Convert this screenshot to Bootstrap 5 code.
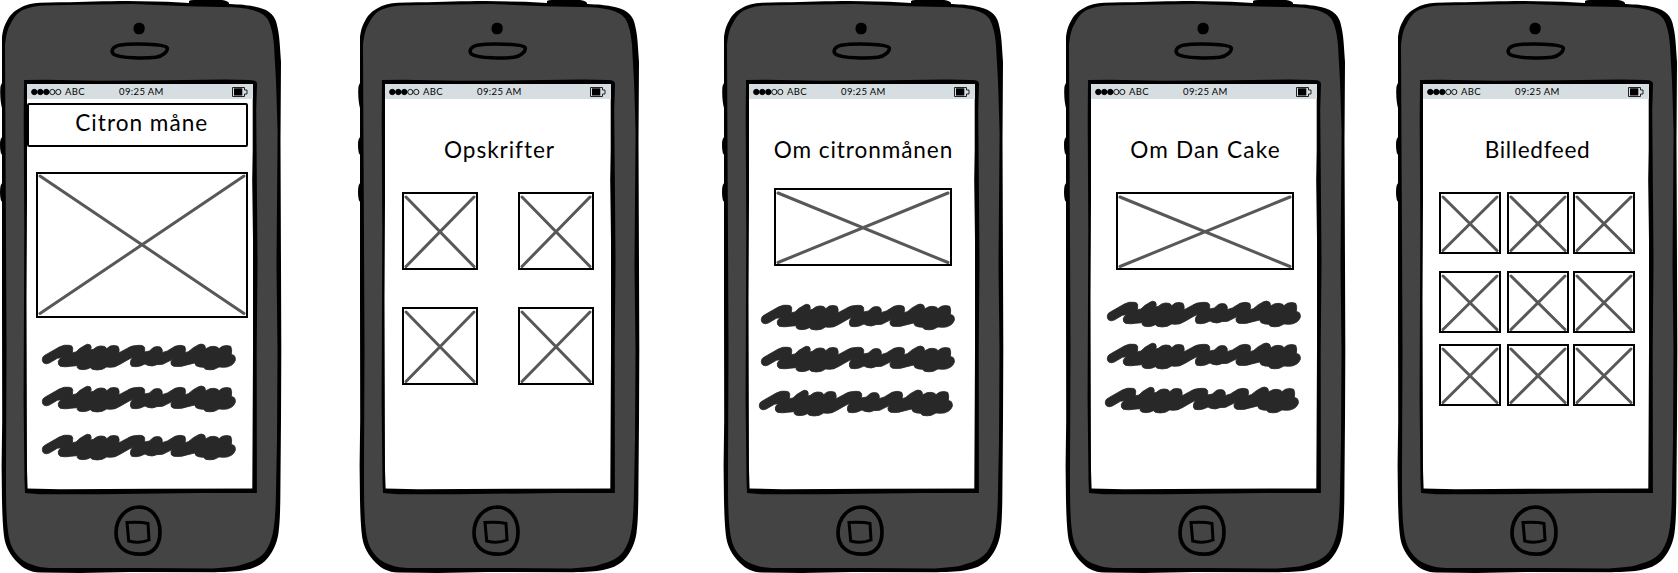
<!DOCTYPE html>
<html lang="da">
<head>
<meta charset="utf-8">
<meta name="viewport" content="width=device-width, initial-scale=1">
<title>Citron måne – wireframes</title>
<link href="https://cdn.jsdelivr.net/npm/bootstrap@5.3.0/dist/css/bootstrap.min.css" rel="stylesheet">
<style>
  body { background: #fff; color: #000; font-family: Lato, "Open Sans", sans-serif; overflow: hidden; }
  .storyboard { display: grid; grid-template-columns: 358px 364px 342px 332px 282px; height: 573px; }
  /* frame drawing and screen share one grid cell */
  .phone { display: grid; width: 282px; height: 573px; }
  .phone > * { grid-area: 1 / 1; }
  .phone-frame { width: 282px; height: 573px; display: block; }
  .phone-screen { width: 225.5px; height: 404.5px; margin: 84px 0 0 27px; display: flex; flex-direction: column; align-items: flex-start; }
  .status { width: 100%; height: 15px; background: #d7dee2; display: grid; grid-template-columns: 34px 54px 1fr 20.5px; align-items: center; padding-left: 4px; font-size: 9.5px; line-height: 14px; flex: none; white-space: nowrap; }
  .status svg { display: block; }
  .status .carrier { letter-spacing: .4px; }
  .status .clock { letter-spacing: .38px; }
  .screen-title { font-size: 22.6px; line-height: 28px; font-weight: 400; margin: 37px 0 0; width: 229px; text-align: center; white-space: nowrap; flex: none; }
  .t-ops { letter-spacing: .95px; }
  .t-om { letter-spacing: .9px; }
  .t-dan { letter-spacing: 1.15px; }
  .t-feed { letter-spacing: .65px; }
  .title-box { width: 220.5px; height: 44px; margin-top: 3.5px; border: 2px solid #000; border-right-width: 2.5px; border-radius: 2px; flex: none; }
  .title-box .screen-title { width: auto; margin: 4px 0 0 9px; letter-spacing: 1px; }
  .pic { border: 2px solid #000; padding: 2.5px 2px 2px; flex: none; display: flex; }
  .pic svg { width: 100%; height: 100%; overflow: visible; display: block; }
  .pic-hero { width: 212px; height: 146px; margin: 25px 0 26.5px 8.7px; }
  .pic-wide { width: 178px; height: 78px; margin: 24px 0 37.7px 25.3px; }
  .pic-wide.low { margin: 28px 0 31px 25.3px; }
  .recipes { display: grid; grid-template-columns: 76px 76px; column-gap: 40px; row-gap: 37px; margin: 28px 0 0 17.4px; }
  .recipes .pic { height: 78px; }
  .feed { display: grid; grid-template-columns: 68px 66px 62px; grid-template-rows: 79px 73px 62px; margin: 28px 0 0 15.5px; }
  .feed .pic { width: 62px; height: 62px; }
  .scribble { width: 194px; height: 26.3px; display: block; flex: none; overflow: visible; }
  .notes { display: flex; flex-direction: column; }
  .notes-a { margin-left: 15px; gap: 15.8px; }
  .notes-a .scribble:last-child { margin-top: 6.3px; }
  .notes-b { margin-left: 11.7px; gap: 16px; }
  .notes-c { margin-left: 15.7px; gap: 15.8px; }
  .notes-b .scribble:last-child, .notes-c .scribble:last-child { margin: 1.8px 0 0 -2px; }
</style>
</head>
<body>
<!-- shared drawings -->
<svg width="0" height="0" class="position-absolute" aria-hidden="true">
  <symbol id="frame" viewBox="0 0 282 573">
    <path d="M189 5V1Q190 0 194 0H222Q228 1 229 3V8H189Z"/>
    <path d="M3 82Q0 84 .2 92Q.3 102 2 108H5V82ZM3 137Q0 137 0 145Q0 155 3 155ZM3 183Q0 183 0 192Q0 202 3 202Z"/>
    <path d="M2 37C3 30 4 26 7 21C10 15 14 11 20 8C26 4.500 32 3.300 40 2.700L60 2.300C85 2 105 1 127 1L167 1.700L189 3L230 4C240 4.500 247 5 253 6.300C260 7.500 265 9 269 12C273 15 275 18 276.500 23C278 29 279 34 279.600 42L281 62L280.500 140L281 265L281.300 350L281 420L280.300 500C280 515 279.800 523 278.500 533C277 544 272 554 265 561C260 565.500 253 568.500 245 570C238 571.500 228 572 215 572.200L130 572L80 573L40 572.500C30 572 24 569 18 563C10 555 6 547 4.500 539C3 530 2.300 515 2 500L1.600 466L2.200 420L2 300Z"/>
    <path fill="#444" d="M5 45C6 36 7 30 10.500 24C14 17 18 12 24 9.500C30 7 36 5.900 43 5.500L80 4.800L133 4L187 6.300L233 7.300C243 8 250 9 257 11.500C263 14 267 17 269 22C272 29 273 35 274 45C275 65 276 75 276.500 95L277.600 133L276.500 265L277.500 350L277 440L275.800 500C275.500 510 275 518 274 526C272.500 537 270 545 265 552C260 558 254 561 247 563C240 565.500 236 566.500 230 567L213 568.500L145 568L50 568C41 567.500 36 566.500 30 564C22 561 16 555 12.500 548C9 541 8 533 7 522C6 508 6 490 6 466L6.500 350L6 240L5.500 150Z"/>
    <path d="M24 80L45 79.700L100 80.700L165 80.300L225 79.500L250 80Q257 80 257 84L256.200 110L257 200L257.500 262L256.700 350L256.900 493L200 493L100 494.300L40 494.300L25 493L24.500 480L23.600 400L24.300 230L23.700 120Z"/>
    <path fill="#fff" d="M27 84H250Q252.700 85 252.700 88V150L252.200 180L253 240L253 350L252.300 488.500L150 488.700L60 489.300L27.600 488.500L27 470L26.500 300L27 200Z"/>
    <path d="M139 22.700C143 22.700 144.700 25 144.700 28C144.700 32 143 34.300 139 34.300C135.500 34.300 133.500 32 133.500 28.500C133.500 25 135.500 22.700 139 22.700Z"/>
    <path fill="none" stroke="#000" stroke-width="3.500" d="M119 45.200C112 47 110.500 52 114 54.500C121 58.300 145 58.700 156 57.300C163 56.300 168 51 167.300 47.800C165 43.700 132 43 119 45.200Z"/>
    <path fill="none" stroke="#000" stroke-width="3.700" d="M139 507C151 507 160 517 160 532.300C160 547 152 554.500 140 554.200C126 554.200 116 547 116 533C116 518 126 507.500 139 507Z"/>
    <path fill="none" stroke="#000" stroke-width="3" d="M127 522.500C135 522 142 522 148 523.500L149 540Q140 544 128.700 541Z"/>
  </symbol>
  <symbol id="cross" viewBox="0 0 100 100" preserveAspectRatio="none" overflow="visible">
    <path d="M0 0L100 100M100 0L0 100" fill="none" stroke="#585858" stroke-width="3" stroke-linecap="round" vector-effect="non-scaling-stroke"/>
  </symbol>
  <symbol id="scrawl" viewBox="36 27 582 79" preserveAspectRatio="none" overflow="visible">
    <path fill="#282828" stroke="#282828" stroke-width="2.500" stroke-linejoin="round" d="M37 73Q37 64 46 60L88 36Q103 28 118 31Q130 32 128 44L127 53L138 51L150 40L165 31Q172 25 181 30Q186 37 182 45L190 43L200 36Q210 31 222 34Q230 38 230 41L241 33Q253 29 264 34Q269 42 267 52L266 54L290 41Q305 31 325 31Q343 30 344 40L344 51L358 48L371 37Q380 33 391 36Q398 42 397 49L396 53L412 48L435 34Q452 28 464 34Q469 42 465 53L475 50L490 38L506 29Q514 25 523 30Q528 37 526 42L540 35Q552 32 563 37L567 41L577 34Q590 29 602 34Q607 43 604 58L613 62Q617 68 616 76Q612 87 604 91Q592 98 580 97L567 96L553 103Q540 106 527 103L520 97Q508 97 498 92L494 84L470 90Q453 97 431 94Q421 91 423 80Q424 74 434 70L398 88L380 89Q367 96 353 91L345 87L331 93Q318 97 305 94Q299 88 302 78Q304 70 309 66L294 74L270 88Q255 98 240 97L230 96L217 103Q201 107 187 103L181 98L172 102Q158 106 146 102Q139 97 142 92L122 94Q106 97 91 94Q83 90 85 79Q88 71 95 68L82 70L58 84Q48 89 41 84Q36 79 37 73Z"/>
  </symbol>
  <symbol id="dots" viewBox="0 0 31 8">
    <g stroke="#000" stroke-width=".9"><circle cx="3.300" cy="4" r="2.700"/><circle cx="9.300" cy="4" r="2.700"/><circle cx="15.300" cy="4" r="2.700"/><circle cx="21.300" cy="4" r="2.600" fill="none"/><circle cx="27.300" cy="4" r="2.600" fill="none"/></g>
  </symbol>
  <symbol id="battery" viewBox="0 0 16 10">
    <path d="M.5 .5H12.500V3H15V7H12.500V9.500H.5Z" fill="none" stroke="#222"/><path d="M2 1.300H10.300V8.500H2Z"/>
  </symbol>
</svg>

<main class="storyboard">
  <section class="phone">
    <svg class="phone-frame"><use href="#frame"/></svg>
    <div class="phone-screen">
      <div class="status"><svg width="31" height="8"><use href="#dots"/></svg><span class="carrier">ABC</span><span class="clock">09:25 AM</span><svg width="16" height="10"><use href="#battery"/></svg></div>
      <div class="title-box"><h1 class="screen-title">Citron måne</h1></div>
      <div class="pic pic-hero"><svg><use href="#cross"/></svg></div>
      <div class="notes notes-a">
        <svg class="scribble"><use href="#scrawl"/></svg>
        <svg class="scribble"><use href="#scrawl"/></svg>
        <svg class="scribble"><use href="#scrawl"/></svg>
      </div>
    </div>
  </section>

  <section class="phone">
    <svg class="phone-frame"><use href="#frame"/></svg>
    <div class="phone-screen">
      <div class="status"><svg width="31" height="8"><use href="#dots"/></svg><span class="carrier">ABC</span><span class="clock">09:25 AM</span><svg width="16" height="10"><use href="#battery"/></svg></div>
      <h2 class="screen-title t-ops">Opskrifter</h2>
      <div class="recipes">
        <div class="pic"><svg><use href="#cross"/></svg></div>
        <div class="pic"><svg><use href="#cross"/></svg></div>
        <div class="pic"><svg><use href="#cross"/></svg></div>
        <div class="pic"><svg><use href="#cross"/></svg></div>
      </div>
    </div>
  </section>

  <section class="phone">
    <svg class="phone-frame"><use href="#frame"/></svg>
    <div class="phone-screen">
      <div class="status"><svg width="31" height="8"><use href="#dots"/></svg><span class="carrier">ABC</span><span class="clock">09:25 AM</span><svg width="16" height="10"><use href="#battery"/></svg></div>
      <h2 class="screen-title t-om">Om citronmånen</h2>
      <div class="pic pic-wide"><svg><use href="#cross"/></svg></div>
      <div class="notes notes-b">
        <svg class="scribble"><use href="#scrawl"/></svg>
        <svg class="scribble"><use href="#scrawl"/></svg>
        <svg class="scribble"><use href="#scrawl"/></svg>
      </div>
    </div>
  </section>

  <section class="phone">
    <svg class="phone-frame"><use href="#frame"/></svg>
    <div class="phone-screen">
      <div class="status"><svg width="31" height="8"><use href="#dots"/></svg><span class="carrier">ABC</span><span class="clock">09:25 AM</span><svg width="16" height="10"><use href="#battery"/></svg></div>
      <h2 class="screen-title t-dan">Om Dan Cake</h2>
      <div class="pic pic-wide low"><svg><use href="#cross"/></svg></div>
      <div class="notes notes-c">
        <svg class="scribble"><use href="#scrawl"/></svg>
        <svg class="scribble"><use href="#scrawl"/></svg>
        <svg class="scribble"><use href="#scrawl"/></svg>
      </div>
    </div>
  </section>

  <section class="phone">
    <svg class="phone-frame"><use href="#frame"/></svg>
    <div class="phone-screen">
      <div class="status"><svg width="31" height="8"><use href="#dots"/></svg><span class="carrier">ABC</span><span class="clock">09:25 AM</span><svg width="16" height="10"><use href="#battery"/></svg></div>
      <h2 class="screen-title t-feed">Billedfeed</h2>
      <div class="feed">
        <div class="pic"><svg><use href="#cross"/></svg></div>
        <div class="pic"><svg><use href="#cross"/></svg></div>
        <div class="pic"><svg><use href="#cross"/></svg></div>
        <div class="pic"><svg><use href="#cross"/></svg></div>
        <div class="pic"><svg><use href="#cross"/></svg></div>
        <div class="pic"><svg><use href="#cross"/></svg></div>
        <div class="pic"><svg><use href="#cross"/></svg></div>
        <div class="pic"><svg><use href="#cross"/></svg></div>
        <div class="pic"><svg><use href="#cross"/></svg></div>
      </div>
    </div>
  </section>
</main>
<script src="https://cdn.jsdelivr.net/npm/bootstrap@5.3.0/dist/js/bootstrap.bundle.min.js"></script>
</body>
</html>
